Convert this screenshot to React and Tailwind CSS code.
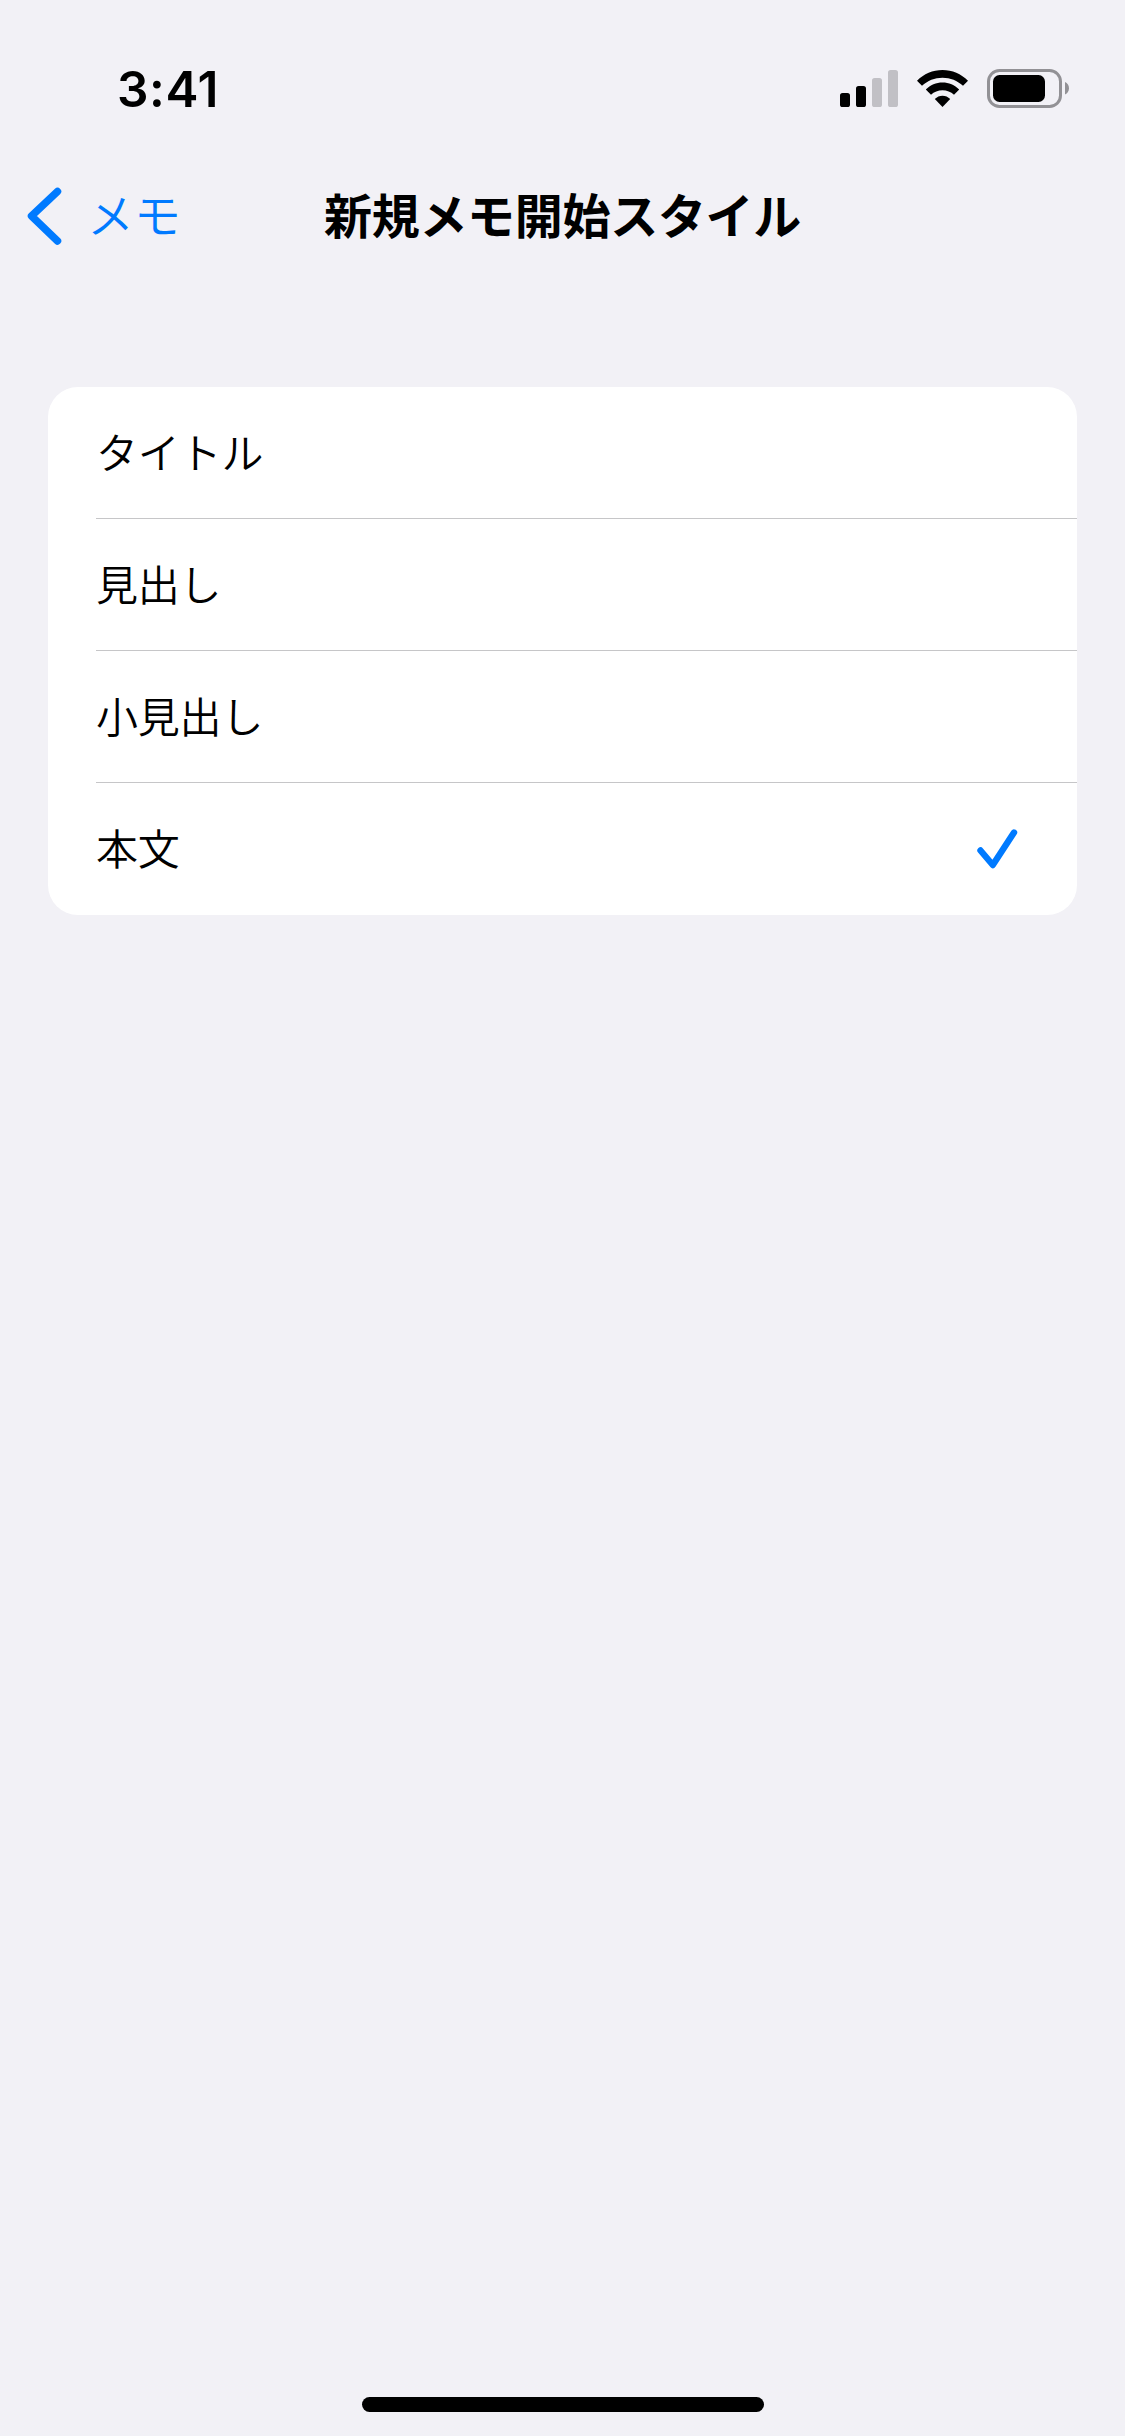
import React, { useState } from "react";
import clsx from "clsx";

const styles = [
  { id: "title", label: "タイトル" },
  { id: "heading", label: "見出し" },
  { id: "subheading", label: "小見出し" },
  { id: "body", label: "本文" },
];

const SignalIcon = () => (
  <svg width="58" height="37" viewBox="0 0 58 37">
    <rect x="0" y="23" width="10" height="14" rx="2.6" fill="#000" />
    <rect x="16" y="16" width="10" height="21" rx="2.6" fill="#000" />
    <rect x="32" y="8" width="10" height="29" rx="2.6" fill="#c1c0c5" />
    <rect x="48" y="0" width="10" height="37" rx="2.6" fill="#c1c0c5" />
  </svg>
);

const WifiIcon = () => (
  <svg width="51" height="37" viewBox="0 0 51 37" fill="#000">
    <path d="M0 10.8C6.8 3.9 15.8 0 25.5 0S44.2 3.9 51 10.8L46 15.8C40.5 10.6 33.3 7.7 25.5 7.7S10.5 10.6 5 15.8Z" />
    <path d="M8.8 19.6C13.3 15.2 19.2 12.6 25.5 12.6S37.7 15.2 42.2 19.6L37 24.8C33.9 21.9 29.8 20.3 25.5 20.3S17.1 21.9 14 24.8Z" />
    <path d="M17.8 29C19.9 26.9 22.6 25.7 25.5 25.7S31.1 26.9 33.2 29L25.5 37Z" />
  </svg>
);

const BatteryIcon = () => (
  <svg width="82" height="39" viewBox="0 0 82 39">
    <rect x="1.5" y="1.5" width="72" height="36" rx="11" fill="none" stroke="#929195" strokeWidth="3" />
    <rect x="6" y="6" width="52" height="27" rx="6.5" fill="#000" />
    <path d="M78 13C80.5 14 82 16.5 82 19.3S80.5 24.6 78 25.6Z" fill="#929195" />
  </svg>
);

const App = () => {
  const [selected, setSelected] = useState("body");

  return (
    <div className="flex h-[2436px] w-[1125px] flex-col bg-[#f2f1f6] font-['Noto_Sans_CJK_JP',sans-serif] text-black">

      {/* Status bar */}
      <div className="flex h-[141px] items-start justify-between pl-[117px] pr-[56px]">
        <p className="mt-[59px] font-['Inter',sans-serif] text-[49.5px] leading-[60px] font-semibold tracking-[0.6px]">3:41</p>
        <div className="mt-[69px] flex items-center">
          <SignalIcon />
          <div className="ml-[19px]"><WifiIcon /></div>
          <div className="ml-[19px]"><BatteryIcon /></div>
        </div>
      </div>

      {/* Navigation bar */}
      <div className="grid h-[150px] grid-cols-[324px_1fr_324px] items-center">
        <button className="flex items-center pl-[27px] text-[#007aff]">
          <svg width="35" height="58" viewBox="0 0 35 58" fill="none" stroke="currentColor" strokeWidth="7.5" strokeLinecap="round" strokeLinejoin="round">
            <path d="M30.5 4.5L4.5 29L30.5 54" />
          </svg>
          <span className="ml-[25px] pb-[6px] text-[47px] leading-[60px] font-[350]">メモ</span>
        </button>
        <h1 className="pb-[6px] text-center text-[48px] leading-[60px] font-bold tracking-[-0.3px] whitespace-nowrap">
          新規メモ開始スタイル
        </h1>
      </div>

      {/* Style list */}
      <ul className="mx-12 mt-24 overflow-hidden rounded-[30px] bg-white">
        {styles.map((style, i) => (
          <li key={style.id} className="pl-12">
            <button
              className={clsx(
                "flex h-[132px] w-full items-center justify-between pr-[59px] text-left",
                i < styles.length - 1 && "border-b border-[#c6c6c8]"
              )}
              onClick={() => setSelected(style.id)}
            >
              <span className="pb-[4px] text-[42px] leading-[60px] font-[350] tracking-[-0.2px]">{style.label}</span>
              {selected === style.id && (
                <svg width="42" height="40" viewBox="0 0 42 40" fill="none" stroke="#007aff" strokeWidth="6.4" strokeLinecap="round" strokeLinejoin="round">
                  <path d="M4.5 21.5L16.8 36L38 3.5" />
                </svg>
              )}
            </button>
          </li>
        ))}
      </ul>

      {/* Home indicator */}
      <div className="mx-auto mt-auto mb-6 h-[15px] w-[402px] rounded-full bg-black" />
    </div>
  );
};

export default App;
